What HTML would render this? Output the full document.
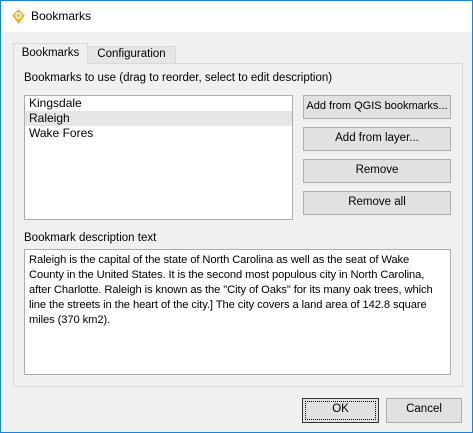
<!DOCTYPE html>
<html><head><style>
*{box-sizing:border-box;margin:0;padding:0}
body{width:473px;height:433px;overflow:hidden;font-family:"Liberation Sans",sans-serif;font-size:11.5px;color:#000;background:#f0f0f0;position:relative}
.win{position:absolute;left:0;top:0;width:473px;height:433px;border:1px solid #1883d7;background:#f0f0f0}
.title{position:absolute;left:0;top:0;width:471px;height:31px;background:#fff}
.title span{position:absolute;left:30px;top:8px;font-size:12px}
.a{position:absolute;white-space:nowrap}
.pane{left:12px;top:62px;width:450px;height:324px;border:1px solid #d9d9d9;background:#f0f0f0}
.tab{border:1px solid #d9d9d9;border-bottom:none;text-align:center}
.btn{border:1px solid #adadad;background:#e1e1e1;text-align:center;line-height:21px;font-size:11.5px}
.box{background:#fff;border:1px solid #abadb3}
</style></head><body>
<div class="win">
<div class="title">
<svg class="a" style="left:9px;top:7px" width="17" height="17" viewBox="0 0 16 16"><path d="M8 1 L14 7 L8 15 L2 7Z" fill="#f0b429"/><circle cx="8" cy="7" r="3" fill="#fff"/><circle cx="8" cy="7" r="1.5" fill="#f0b429"/></svg>
<span>Bookmarks</span></div>
<div class="a tab" style="left:12px;top:42px;width:75px;height:21px;background:#f0f0f0;z-index:2;padding-top:3px">Bookmarks</div>
<div class="a tab" style="left:86px;top:45px;width:89px;height:17px;background:#e6e6e6;padding-top:1px">Configuration</div>
<div class="a pane"></div>
<div class="a" style="left:23px;top:71px">Bookmarks to use (drag to reorder, select to edit description)</div>
<div class="a box" style="left:23px;top:94px;width:269px;height:125px;font-size:12px">
<div style="padding-left:4px;height:15px;line-height:15px">Kingsdale</div>
<div style="padding-left:4px;height:15px;line-height:15px;background:#e5e5e5">Raleigh</div>
<div style="padding-left:4px;height:15px;line-height:15px">Wake Fores</div>
</div>
<div class="a btn" style="left:302px;top:94px;width:148px;height:24px;font-size:11px">Add from QGIS bookmarks...</div>
<div class="a btn" style="left:302px;top:126px;width:148px;height:24px">Add from layer...</div>
<div class="a btn" style="left:302px;top:158px;width:148px;height:24px">Remove</div>
<div class="a btn" style="left:302px;top:190px;width:148px;height:24px">Remove all</div>
<div class="a" style="left:23px;top:231px">Bookmark description text</div>
<div class="a box" style="left:23px;top:248px;width:427px;height:126px;padding:3px 4px;line-height:15px;white-space:normal;font-size:11.2px;letter-spacing:-0.1px">Raleigh is the capital of the state of North Carolina as well as the seat of Wake County in the United States. It is the second most populous city in North Carolina, after Charlotte. Raleigh is known as the "City of Oaks" for its many oak trees, which line the streets in the heart of the city.] The city covers a land area of 142.8 square miles (370 km2).</div>
<div class="a btn" style="left:301px;top:397px;width:77px;height:25px;border-color:#333;outline:1px dotted #000;outline-offset:-4px">OK</div>
<div class="a btn" style="left:385px;top:397px;width:76px;height:25px">Cancel</div>
</div>
</body></html>
